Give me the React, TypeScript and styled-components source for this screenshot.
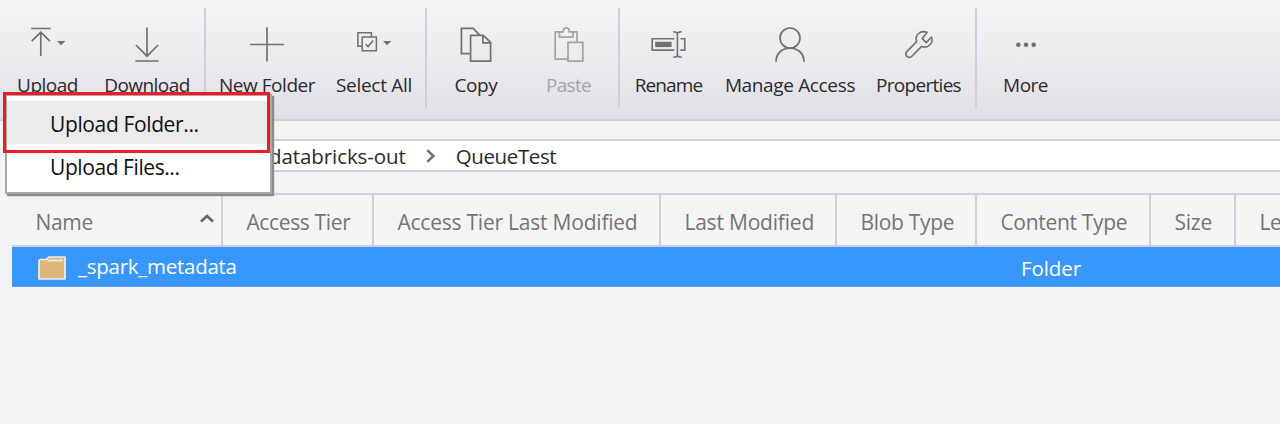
import React from "react";
import styled, { createGlobalStyle } from "styled-components";

const GlobalStyle = createGlobalStyle`
  * { box-sizing: border-box; }
  body {
    margin: 0;
    background: #f4f4f4;
    font-family: "Open Sans", "Noto Sans", sans-serif;
    overflow: hidden;
  }
`;

const Page = styled.div`
  position: relative;
  width: 1280px;
  height: 424px;
  overflow: hidden;
  background: #f4f4f4;
`;

const Text = styled.span<{ $track?: number }>`
  white-space: nowrap;
  letter-spacing: ${(p) => p.$track ?? -0.3}px;
`;

const Toolbar = styled.div`
  display: flex;
  height: 121px;
  padding-top: 8px;
  border-bottom: 2px solid #ced0df;
  background: linear-gradient(#f4f4f5 0%, #ececef 45%, #e0dfe5 100%);
`;

const Tool = styled.div<{ $width: number; $disabled?: boolean }>`
  display: flex;
  flex: none;
  flex-direction: column;
  align-items: center;
  width: ${(p) => p.$width}px;
  padding-top: 14px;
  color: ${(p) => (p.$disabled ? "#a6a6a8" : "#2b2b2d")};
  font-size: 19px;
  line-height: 28px;

  svg {
    display: block;
    margin-bottom: 3px;
    color: ${(p) => (p.$disabled ? "#a3a3a5" : "#717173")};
  }
`;

const Divider = styled.div<{ $before?: number }>`
  flex: none;
  width: 2px;
  height: 100px;
  margin-left: ${(p) => p.$before ?? 0}px;
  background: #cdcfde;
`;

const Breadcrumb = styled.div`
  display: flex;
  align-items: center;
  height: 33px;
  margin: 18px 0 0 12px;
  padding-left: 255px;
  border: solid #cfd0df;
  border-width: 2px 0 2px 2px;
  background: #fff;
  color: #2b2b2b;
  font-size: 20.5px;
  line-height: 28px;

  svg { margin: 0 20px; }
`;

const Table = styled.div`
  margin: 21px 0 0 12px;
  border-top: 2px solid #cfd0de;
  font-size: 21px;
`;

const HeaderRow = styled.div`
  display: flex;
  height: 52px;
  border-bottom: 2px solid #ccd0df;
`;

const HeaderCell = styled.div<{ $width: number }>`
  display: flex;
  flex: none;
  align-items: center;
  justify-content: space-between;
  width: ${(p) => p.$width}px;
  padding: 3px 7px 0 23.4px;
  border-right: 2px solid #cdcfdf;
  color: #747474;

  svg { margin-bottom: 6px; }
`;

const Row = styled.div`
  display: flex;
  height: 40px;
  background: #3797ff;
  border-bottom: 1px solid #55a6ff;
  color: #fff;
  line-height: 38px;
  font-size: 20.5px;
`;

const NameCell = styled.div`
  display: flex;
  align-items: center;
  width: 1009px;
  padding: 0 0 1px 26px;

  svg { margin: 3px 12px 0 0; }
`;

const TypeCell = styled.div`
  padding-top: 2px;
`;

const Menu = styled.div`
  position: absolute;
  left: 5px;
  top: 94px;
  width: 267px;
  height: 100px;
  padding-top: 5px;
  border: 2px solid #a8a8a8;
  background: #fff;
  box-shadow: 2px 2px 1px #8a8a8a;
  color: #111;
  font-size: 21px;
`;

const MenuItem = styled.div<{ $active?: boolean }>`
  height: 43px;
  padding-left: 43px;
  line-height: 47px;
  background: ${(p) => (p.$active ? "#ebebeb" : "transparent")};
`;

const Highlight = styled.div`
  position: absolute;
  left: 3px;
  top: 92px;
  width: 267px;
  height: 61px;
  border: 3px solid #ed1c24;
`;

type GlyphProps = { width: number; children: React.ReactNode };

const Glyph = ({ width, children }: GlyphProps) => (
  <svg width={width} height="46" viewBox={`0 0 ${width} 46`} fill="none" stroke="currentColor" strokeWidth="1.7">
    {children}
  </svg>
);

const UploadIcon = () => (
  <Glyph width={35}>
    <path d="M1.2 6.5h19.4M10.8 11v23M1.7 19.2l9.1-9 9.1 9" />
    <path d="M27 19h8.2l-4.1 4.2z" fill="currentColor" stroke="none" />
  </Glyph>
);

const DownloadIcon = () => (
  <Glyph width={24}>
    <path d="M12 5.5V34M.9 23L12 34.2 23.1 23M.3 39h23.4" />
  </Glyph>
);

const PlusIcon = () => (
  <Glyph width={34}>
    <path d="M17 5.3v34.3M0 22.5h34" />
  </Glyph>
);

const SelectAllIcon = () => (
  <Glyph width={34}>
    <path d="M5 24.2H.9V10.7h13.5v3.8M5.2 15h14.2v13.8H5.2zM8.7 22.2l2.4 2.4 5-6" strokeWidth="1.5" />
    <path d="M26 19h8.2l-4.1 4.2z" fill="currentColor" stroke="none" />
  </Glyph>
);

const CopyIcon = () => (
  <Glyph width={32}>
    <path d="M9.8 31.7H1.4V6.3h11.8l6.3 6.5M10.6 13.3h12.7l7.3 7v18.8h-20zM22.9 13.3V20.8h7.7" />
  </Glyph>
);

const PasteIcon = () => (
  <Glyph width={30}>
    <path d="M14 37.1H1.2V9.9h4.3M18.8 9.9H23v10.4M14 20.3h14.8v18.8H14zM5.5 9.9h3.7c.1-5.4 6-5.4 6.1 0h3.7v5.2H5.5z" />
  </Glyph>
);

const RenameIcon = () => (
  <Glyph width={35}>
    <path d="M23.3 16.7H1.2v11.4h22.1M29.4 16.7h4.4v11.4h-4.4M26.4 12v20.8M22.2 9.8c2.5 0 4.2.6 4.2 2.4 0-1.8 1.7-2.4 4.3-2.4M22.2 35.2c2.5 0 4.2-.6 4.2-2.4 0 1.8 1.7 2.4 4.3 2.4" strokeWidth="1.6" />
    <path d="M4.2 19.8h16.4v5.3H4.2z" fill="currentColor" stroke="none" />
  </Glyph>
);

const PersonIcon = () => (
  <Glyph width={32}>
    <circle cx="16" cy="16" r="10" />
    <path d="M2 39.8c0-18.3 28-18.3 28 0" />
  </Glyph>
);

const WrenchIcon = () => (
  <Glyph width={28}>
    <path
      d="M22.2 10.3c-7.4-2.7-12.9 3.4-10.5 9.3L2 29.4c-3.2 3.4 1.5 8.1 4.9 4.8l9.7-9.8c6.2 2.5 12.4-3 9.8-9.4L21.2 20.6l-4-4.2z"
      strokeWidth="1.6"
      strokeLinejoin="round"
    />
  </Glyph>
);

const DotsIcon = () => (
  <Glyph width={22}>
    <g fill="currentColor" stroke="none">
      <circle cx="3.3" cy="22.7" r="2.3" />
      <circle cx="11" cy="22.7" r="2.3" />
      <circle cx="18.7" cy="22.7" r="2.3" />
    </g>
  </Glyph>
);

const ChevronRight = () => (
  <svg width="10" height="14" viewBox="0 0 10 14" fill="none" stroke="#707070" strokeWidth="2.5">
    <path d="M1.3 1.2L7.4 7l-6.1 5.8" />
  </svg>
);

const SortUp = () => (
  <svg width="14" height="10" viewBox="0 0 14 10" fill="none" stroke="#686868" strokeWidth="2.7">
    <path d="M1 7.4l6-5.3 6 5.3" />
  </svg>
);

const FolderIcon = () => (
  <svg width="28" height="24" viewBox="0 0 28 24">
    <path d="M1 4.5l1-1h6.5L10.8 1H27v22H1z" fill="#dcb67a" stroke="#f1eee8" strokeWidth="1.7" strokeLinejoin="round" />
    <path d="M9 5.6l2.4-2H25v2z" fill="#f3e9dc" />
  </svg>
);

const columns = [
  { label: "Name", width: 211, track: -0.3, sorted: true },
  { label: "Access Tier", width: 151, track: -0.35 },
  { label: "Access Tier Last Modified", width: 287, track: -0.22 },
  { label: "Last Modified", width: 176, track: -0.2 },
  { label: "Blob Type", width: 140, track: -0.3 },
  { label: "Content Type", width: 174, track: -0.3 },
  { label: "Size", width: 85, track: -0.2 },
  { label: "Lease State", width: 160, track: -0.3 },
];

export default function App() {
  return (
    <Page>
      <GlobalStyle />
      <Toolbar>
        <Tool $width={95}><UploadIcon /><Text $track={-0.5}>Upload</Text></Tool>
        <Tool $width={104}><DownloadIcon /><Text $track={-0.55}>Download</Text></Tool>
        <Divider $before={5} />
        <Tool $width={122}><PlusIcon /><Text $track={-0.45}>New Folder</Text></Tool>
        <Tool $width={92}><SelectAllIcon /><Text>Select All</Text></Tool>
        <Divider $before={5} />
        <Tool $width={98}><CopyIcon /><Text $track={-0.4}>Copy</Text></Tool>
        <Tool $width={87} $disabled><PasteIcon /><Text $track={-0.7}>Paste</Text></Tool>
        <Divider $before={6} />
        <Tool $width={97}><RenameIcon /><Text $track={-0.9}>Rename</Text></Tool>
        <Tool $width={146}><PersonIcon /><Text $track={-0.35}>Manage Access</Text></Tool>
        <Tool $width={111}><WrenchIcon /><Text $track={-0.7}>Properties</Text></Tool>
        <Divider $before={1} />
        <Tool $width={97}><DotsIcon /><Text $track={-0.55}>More</Text></Tool>
      </Toolbar>
      <Breadcrumb>
        <Text $track={-0.08}>databricks-out</Text>
        <ChevronRight />
        <Text $track={-0.4}>QueueTest</Text>
      </Breadcrumb>
      <Table>
        <HeaderRow>
          {columns.map((c) => (
            <HeaderCell key={c.label} $width={c.width}>
              <Text $track={c.track}>{c.label}</Text>
              {c.sorted && <SortUp />}
            </HeaderCell>
          ))}
        </HeaderRow>
        <Row>
          <NameCell><FolderIcon /><Text $track={-0.26}>_spark_metadata</Text></NameCell>
          <TypeCell><Text $track={-0.1}>Folder</Text></TypeCell>
        </Row>
      </Table>
      <Menu>
        <MenuItem $active><Text $track={-0.37}>Upload Folder...</Text></MenuItem>
        <MenuItem><Text $track={-0.42}>Upload Files...</Text></MenuItem>
      </Menu>
      <Highlight />
    </Page>
  );
}
